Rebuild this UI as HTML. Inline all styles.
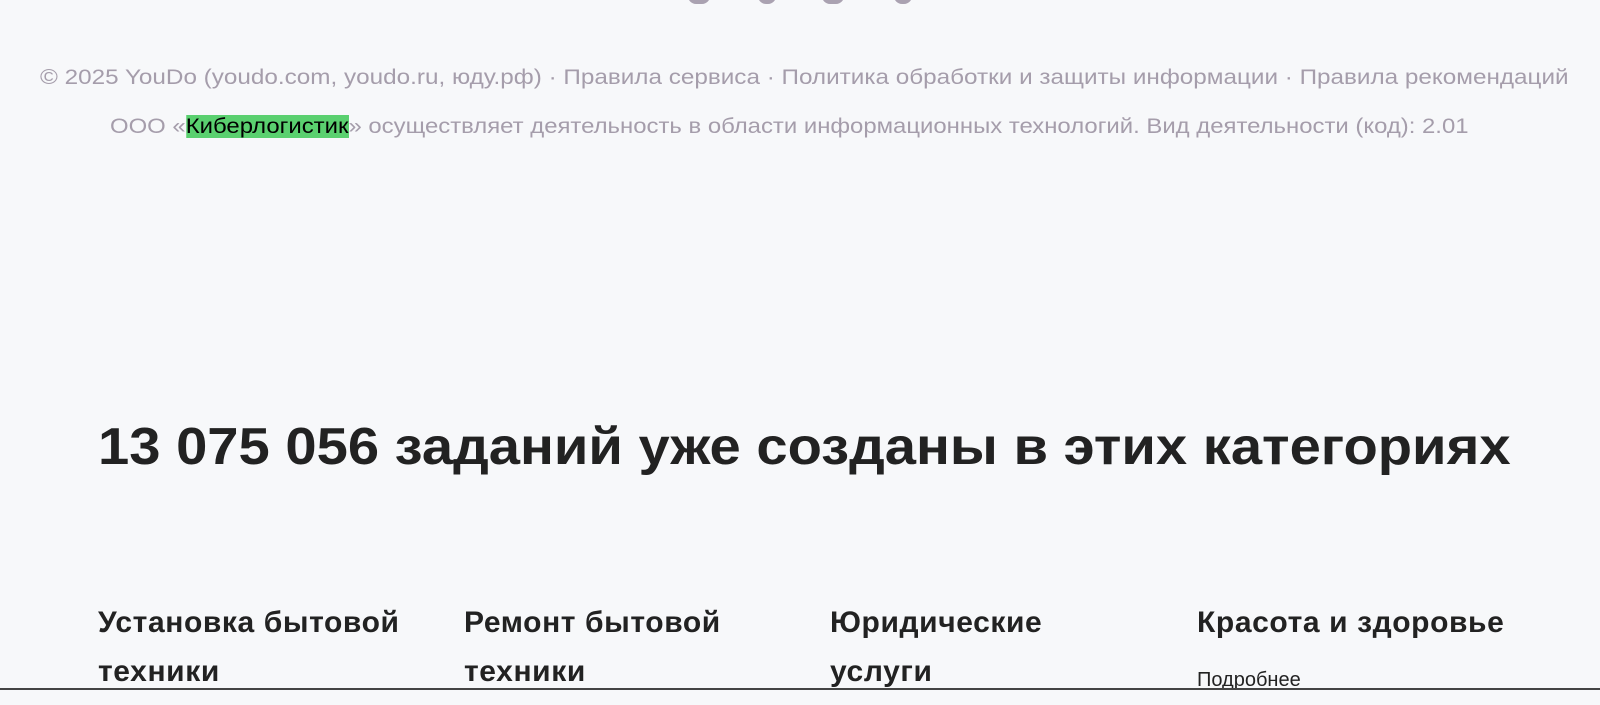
<!DOCTYPE html>
<html><head><meta charset="utf-8"><style>
body{margin:0;width:1600px;height:703px;background:#f7f8fa;font-family:"Liberation Sans",sans-serif;overflow:hidden;position:relative}
.t{position:absolute;white-space:nowrap;color:#a59dab;font-size:21px;transform-origin:0 0}
.ic{position:absolute;top:-14px;width:22px;height:18px;background:#aaa2b1;border-radius:8px}
h1{position:absolute;left:98px;top:417px;margin:0;font-size:52px;font-weight:bold;color:#222;white-space:nowrap;transform:scaleX(1.08);transform-origin:0 0}
.c{position:absolute;top:598px;font-size:30px;font-weight:bold;color:#222;line-height:49px;letter-spacing:0.6px;white-space:nowrap}
</style></head><body>
<div class="ic" style="left:688px"></div>
<div class="ic" style="left:758px;width:18px"></div>
<div class="ic" style="left:822px"></div>
<div class="ic" style="left:894px;width:18px"></div>
<div class="t" style="left:40px;top:66px;transform:scaleX(1.156)">© 2025 YouDo (youdo.com, youdo.ru, юду.рф) · Правила сервиса · Политика обработки и защиты информации · Правила рекомендаций</div>
<div class="t" style="left:110px;top:115px;transform:scaleX(1.138)">ООО «<span style="background:#5ad06f;color:#000">Киберлогистик</span>» осуществляет деятельность в области информационных технологий. Вид деятельности (код): 2.01</div>
<h1>13 075 056 заданий уже созданы в этих категориях</h1>
<div class="c" style="left:98px">Установка бытовой<br>техники</div>
<div class="c" style="left:464px">Ремонт бытовой<br>техники</div>
<div class="c" style="left:830px">Юридические<br>услуги</div>
<div class="c" style="left:1197px">Красота и здоровье</div>
<div style="position:absolute;left:1197px;top:669px;font-size:20px;color:#222">Подробнее</div>
<div style="position:absolute;left:0;top:688px;width:1600px;height:15px;background:#f7f8fa;border-top:2px solid #444"></div>
</body></html>
